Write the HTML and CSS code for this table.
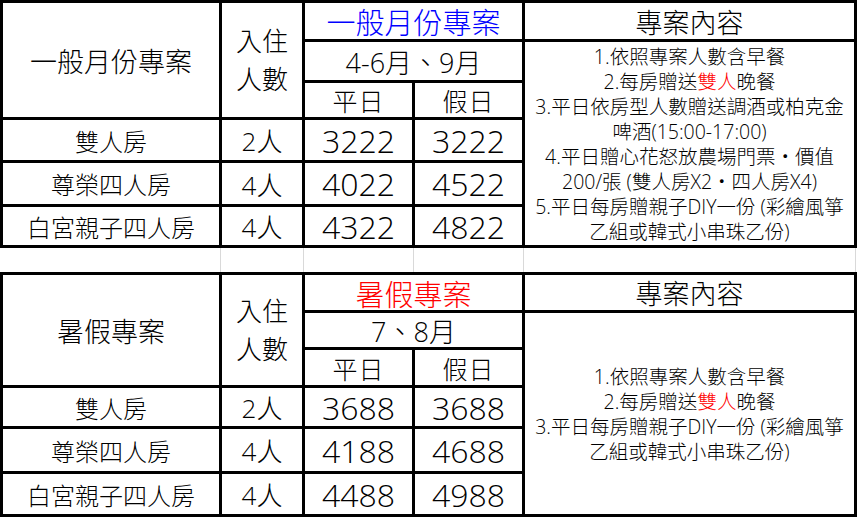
FILE: index.html
```html
<!DOCTYPE html>
<html lang="zh-Hant">
<head>
<meta charset="utf-8">
<title>專案價目表</title>
<link rel="stylesheet" href="styles.css">
</head>
<body>
<div class="page">
  <div class="sheet sheet-top">
    <div class="c title-col r1-3 col1">一般月份專案</div>
    <div class="c pax-head r1-3 col2"><div>入住</div><div>人數</div></div>
    <div class="c plan blue col34 r1">一般月份專案</div>
    <div class="c head col5 r1">專案內容</div>
    <div class="c month col34 r2">4-6月、9月</div>
    <div class="c note col5 r2-7">
      <div>1.依照專案人數含早餐</div>
      <div>2.每房贈送<span class="red">雙人</span>晚餐</div>
      <div>3.平日依房型人數贈送調酒或柏克金</div>
      <div>啤酒(15:00-17:00)</div>
      <div>4.平日贈心花怒放農場門票・價值</div>
      <div>200/張 (雙人房X2・四人房X4)</div>
      <div>5.平日每房贈親子DIY一份 (彩繪風箏</div>
      <div>乙組或韓式小串珠乙份)</div>
    </div>
    <div class="c day">平日</div>
    <div class="c day">假日</div>

    <div class="c room">雙人房</div>
    <div class="c pax">2人</div>
    <div class="c price">3222</div>
    <div class="c price">3222</div>

    <div class="c room">尊榮四人房</div>
    <div class="c pax">4人</div>
    <div class="c price">4022</div>
    <div class="c price">4522</div>

    <div class="c room">白宮親子四人房</div>
    <div class="c pax">4人</div>
    <div class="c price">4322</div>
    <div class="c price">4822</div>
  </div>

  <div class="strip">
    <div class="gl g1"></div>
    <div class="gl g2"></div>
    <div class="gl g3"></div>
    <div class="gl g4"></div>
    <div class="gl g5"></div>
  </div>

  <div class="sheet sheet-bottom">
    <div class="c title-col r1-3 col1">暑假專案</div>
    <div class="c pax-head r1-3 col2"><div>入住</div><div>人數</div></div>
    <div class="c plan red col34 r1">暑假專案</div>
    <div class="c head col5 r1">專案內容</div>
    <div class="c month col34 r2">7、8月</div>
    <div class="c note col5 r2-7">
      <div>1.依照專案人數含早餐</div>
      <div>2.每房贈送<span class="red">雙人</span>晚餐</div>
      <div>3.平日每房贈親子DIY一份 (彩繪風箏</div>
      <div>乙組或韓式小串珠乙份)</div>
    </div>
    <div class="c day">平日</div>
    <div class="c day">假日</div>

    <div class="c room">雙人房</div>
    <div class="c pax">2人</div>
    <div class="c price">3688</div>
    <div class="c price">3688</div>

    <div class="c room">尊榮四人房</div>
    <div class="c pax">4人</div>
    <div class="c price">4188</div>
    <div class="c price">4688</div>

    <div class="c room">白宮親子四人房</div>
    <div class="c pax">4人</div>
    <div class="c price">4488</div>
    <div class="c price">4988</div>
  </div>
</div>
</body>
</html>
```
FILE: styles.css
```css
html, body {
  margin: 0;
  padding: 0;
  background: #fff;
}

body {
  font-family: "Open Sans", "Noto Sans CJK TC", sans-serif;
  font-weight: 300;
  color: #000;
}

.page {
  width: 859px;
  height: 517px;
  overflow: hidden;
}

.sheet {
  display: grid;
  grid-template-columns: 216px 80px 107px 107px 329px;
  gap: 3px;
  padding: 3px;
  background: #000;
  width: max-content;
}

.sheet-top {
  grid-template-rows: 36px 38px 34px 40px 41px 38px;
}

.sheet-bottom {
  grid-template-rows: 35px 34px 35px 38px 42px 40px;
}

.c {
  background: #fff;
  display: flex;
  align-items: center;
  justify-content: center;
  text-align: center;
  white-space: nowrap;
  overflow: visible;
}

.col1 { grid-column: 1; }
.col2 { grid-column: 2; }
.col34 { grid-column: 3 / 5; }
.col5 { grid-column: 5; }
.r1 { grid-row: 1; }
.r2 { grid-row: 2; }
.r1-3 { grid-row: 1 / 4; }
.r2-7 { grid-row: 2 / 7; }

.title-col {
  font-size: 27px;
}

.pax-head {
  flex-direction: column;
  font-size: 26px;
  line-height: 38px;
}

.plan {
  font-size: 29px;
}

.blue { color: #0000ff; }
.red { color: #ff0000; }

.head {
  font-size: 27px;
}

.month {
  font-size: 27px;
}

.day {
  font-size: 25px;
  letter-spacing: 1px;
}

.room {
  font-size: 24px;
}

.pax {
  font-size: 26px;
}

.price {
  font-size: 32px;
}

.note {
  flex-direction: column;
  font-size: 19.5px;
  line-height: 25px;
}

.strip {
  display: flex;
  height: 24px;
  background: #fff;
}

.gl {
  height: 24px;
  border-right: 1px solid #d9d9d9;
}

.g1 { width: 220px; }
.g2 { width: 82px; }
.g3 { width: 109px; }
.g4 { width: 109px; }
.g5 { width: 331px; }
```
